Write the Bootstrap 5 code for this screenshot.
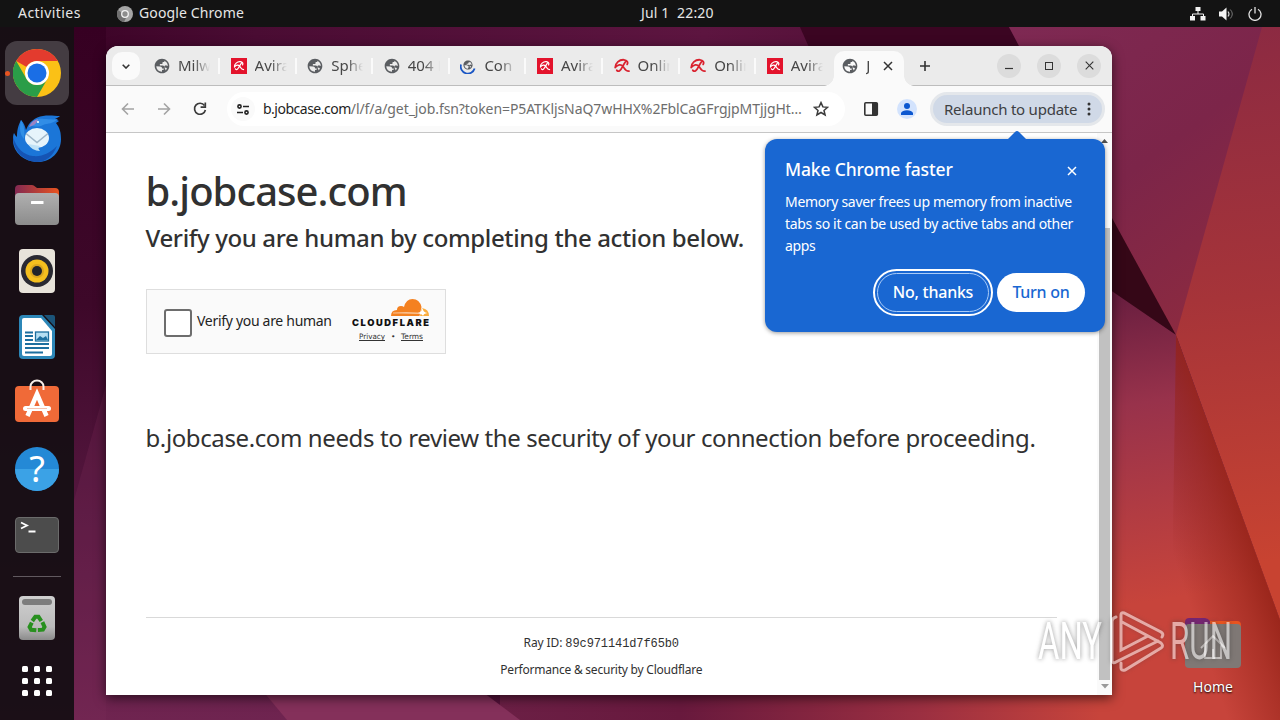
<!DOCTYPE html>
<html lang="en">
<head>
  <meta charset="UTF-8">
  <meta name="viewport" content="width=device-width, initial-scale=1">
  <title>b.jobcase.com</title>
  <link href="https://cdn.jsdelivr.net/npm/bootstrap@5.3.3/dist/css/bootstrap.min.css" rel="stylesheet">
  <style>
    body {
      font-family: "Noto Sans", "Open Sans", sans-serif;
      width: 1280px;
      height: 720px;
      background: #4a0f33;
      line-height: 1.2;
    }
    svg { display: block; flex: none; }
    .wallpaper { z-index: 0; }

    /* top panel */
    .panel {
      height: 27px;
      padding: 0 18px;
      background: #131313;
      color: #e6e6e6;
      font-size: 14px;
      z-index: 2;
    }
    .activities { width: 99px; letter-spacing: .45px; }
    .app-name { width: 502px; letter-spacing: .12px; margin-left: 6px; }
    .clock { letter-spacing: .15px; }
    .panel-icons { gap: 13px; }

    /* dock */
    .desktop { height: 693px; }
    .dock {
      width: 74px;
      padding-top: 14px;
      background: rgba(22, 15, 20, .95);
      gap: 2px;
    }
    .dock-item { width: 64px; height: 64px; border-radius: 12px; }
    .dock-item.running { background: #443c42; }
    .dock-dot { left: 0; top: 30px; width: 5px; height: 5px; background: #e95420; }
    .dock-line { width: 48px; height: 1px; background: #61595f; margin: 7px 0; }
    .dock-apps { height: 58px; }

    /* browser window */
    .window {
      width: 1006px;
      height: 649px;
      margin: 19px 0 0 32px;
      border-radius: 12px 12px 0 0;
      background: #fff;
      box-shadow: 0 3px 12px rgba(0, 0, 0, .6);
    }
    .tabstrip {
      height: 40px;
      padding-left: 6px;
      background: #ebebeb;
      border-bottom: 1px solid #bdbdbd;
      border-radius: 12px 12px 0 0;
      font-size: 15px;
      color: #474747;
    }
    .tab-search { width: 28px; height: 28px; border-radius: 10px; background: #fafafa; margin: 6px 4px 0 0; }
    .tab-item { width: 76.6px; height: 39px; padding-left: 10px; gap: 8px; }
    .tab-label {
      width: 32px;
      line-height: 22px;
      margin-top: -2px;
      -webkit-mask-image: linear-gradient(90deg, #000 50%, transparent);
      mask-image: linear-gradient(90deg, #000 50%, transparent);
    }
    .tab-sep { width: 2px; height: 16px; background: #fafafa; }
    .tab-current {
      width: 70px;
      height: 35px;
      margin: 5px 0 0 1px;
      padding: 0 11px 5px 8px;
      background: #fafafa;
      border-radius: 10px 10px 0 0;
    }
    .tab-current::before, .tab-current::after {
      content: "";
      position: absolute;
      bottom: 0;
      width: 10px;
      height: 10px;
    }
    .tab-current::before { left: -10px; background: radial-gradient(circle at 0 0, transparent 9.5px, #fafafa 10px); }
    .tab-current::after { right: -10px; background: radial-gradient(circle at 100% 0, transparent 9.5px, #fafafa 10px); }
    .tab-current .tab-label { width: 12px; }
    .win-btns { padding-right: 11px; }
    .win-btn { width: 24px; height: 24px; border-radius: 50%; background: #dcdcdc; }

    .toolbar {
      height: 47px;
      background: #fafafa;
      border-bottom: 1px solid #c6c6c6;
      padding: 0 7px 0 12px;
    }
    .tool { width: 20px; height: 20px; margin-right: 16px; }
    .omnibox {
      width: 618px;
      height: 34px;
      margin-left: 1px;
      padding: 0 14px 0 4px;
      border-radius: 17px;
      background: #fff;
      font-size: 14px;
      color: #6d6d6d;
    }
    .site-btn { width: 24px; height: 24px; border-radius: 50%; background: #fafafa; margin-right: 8px; }
    .url { width: 550px; letter-spacing: -.08px; }
    .url b { color: #1f1f1f; font-weight: 400; letter-spacing: -.5px; }
    .profile { width: 20px; height: 20px; border-radius: 50%; background: #d3e3fd; margin-right: 13px; }
    .relaunch {
      width: 175px;
      height: 34px;
      padding: 0 11px;
      border: 3px solid #e4e7eb;
      border-radius: 18px;
      background: #d0d9e7;
      color: #3d4043;
      font-size: 15px;
      letter-spacing: -.23px;
    }

    /* page */
    .page { height: 562px; color: #313131; }
    .page-body { width: 991px; padding: 33px 40px 0 39.5px; }
    .host-title { font-size: 40px; font-weight: 550; line-height: 50px; letter-spacing: -.95px; }
    .verify-title { font-size: 24px; font-weight: 500; line-height: 36px; margin-top: 4px; letter-spacing: -.36px; white-space: nowrap; }
    .challenge {
      width: 300px;
      height: 65px;
      margin: 33px 0 0 .5px;
      padding: 0 15px 0 17px;
      border: 1px solid #dedede;
      background: #fafafa;
      font-size: 14px;
      color: #232323;
    }
    .check { width: 28px; height: 28px; margin: 2px 5px 0 0; border: 2px solid #6d6d6d; border-radius: 3px; background: #fff; }
    .challenge-label { letter-spacing: -.3px; }
    .notice { font-size: 24px; line-height: 36px; margin-top: 66px; white-space: nowrap; letter-spacing: -.39px; }
    .page-foot { border-top: 1px solid #d9d9d9; margin-top: 161px; padding-top: 16px; font-size: 12px; line-height: 18px; }
    .page-foot code { font-family: "Liberation Mono", monospace; font-size: 12px; color: inherit; }
    .foot-id { letter-spacing: -.1px; }
    .foot-label { margin-top: 8px; letter-spacing: -.23px; }

    .scroll-rail { width: 15px; background: #fafafa; padding: 6px 0; }
    .scroll-thumb { width: 11px; height: 452px; background: #c1c1c1; margin-top: 85px; }

    /* promo bubble */
    .bubble {
      left: 659px;
      top: 93px;
      width: 340px;
      height: 193px;
      padding: 18px 20px 20px;
      border-radius: 12px;
      background: #1967d2;
      color: #fff;
      box-shadow: 0 1px 4px rgba(0, 0, 0, .4);
    }
    .bubble-tip { left: 242px; top: -9px; }
    .bubble-title { font-size: 17.5px; font-weight: 550; line-height: 24px; letter-spacing: -.15px; }
    .bubble-text { font-size: 14px; line-height: 22px; margin-top: 10px; letter-spacing: -.32px; }
    .bubble-btn { height: 39px; border-radius: 20px; font-size: 16px; font-weight: 550; letter-spacing: -.25px; }
    .btn-no { width: 112px; border: 1px solid #a9cbf7; outline: 2px solid #fff; outline-offset: 2px; }
    .btn-yes { width: 88px; background: #fff; color: #1967d2; margin-left: 8px; }

    /* desktop items */
    .home-icon { left: 1173px; top: 618px; width: 80px; font-size: 14px; color: #fff; text-shadow: 0 1px 2px #000; }
    .home-label { margin-top: 11px; }
    .watermark { left: 1030px; top: 600px; }
    .watermark g { filter: drop-shadow(0 0 2px rgba(60, 60, 60, .5)); }
  </style>
</head>
<body class="position-relative overflow-hidden m-0">

<!-- shared icons -->
<svg width="0" height="0" class="position-absolute">
  <symbol id="globe" viewBox="0 0 24 24">
    <path fill="#5a5d61" d="M12 1C5.900 1 1 5.900 1 12s4.900 11 11 11 11-4.900 11-11S18.100 1 12 1zM3.500 12.500l5.500 .2c2.500 .2 3.200 1.300 3.200 3.100h2.400v1.700l-2.600 .6v2.600c-4.800 0-8.400-3.600-8.500-8.200zM17.800 18.600l-1.600-2.800c.2-2.400-1-4.200-3.200-4.500H8.800V9h2.500c1 0 1.600-.6 1.600-1.600V6h2.600V4.300c3.200 1.400 5.200 4.300 5.200 7.700l-2.900-1-2.300 1 .8 2.200 3.100.8c-.4 1.400-.9 2.600-1.600 3.600z"/>
  </symbol>
  <symbol id="umbrella" viewBox="0 0 16 16">
    <path fill="none" stroke="currentColor" stroke-width="1.800" stroke-linecap="round" stroke-linejoin="round" d="M1.200 9.500C1.200 5 5.300 1.400 10 1.800c3.200.3 4.300 2.600 3.200 4.600M1.200 9.500C3.800 6.400 7 5.900 9 8.300c1.500 1.800 2 5 6 4.800M11.500 3.800C9 7 8 11 5.600 12.800c-1 .7-2.200.4-2.800-.6"/>
  </symbol>
  <symbol id="avira" viewBox="0 0 16 16">
    <rect width="16" height="16" fill="#e3132c"/>
    <svg x="2.500" y="2.500" width="11" height="11" color="#fff"><use href="#umbrella"/></svg>
  </symbol>
  <symbol id="loading" viewBox="0 0 16 16">
    <svg x="3" y="2" width="10" height="10"><use href="#globe"/></svg>
    <path d="M1 6.500a7 7 0 0 0 13.600 4" fill="none" stroke="#1a56c4" stroke-width="1.800"/>
  </symbol>
  <symbol id="cross" viewBox="0 0 10 10"><path d="M1 1l8 8M9 1L1 9" stroke="currentColor" stroke-width="1.500" fill="none"/></symbol>
</svg>

<!-- wallpaper -->
<svg class="wallpaper position-absolute top-0 start-0" width="1280" height="720" viewBox="0 0 1280 720">
  <defs>
    <linearGradient id="gLeft" x1="0" y1="0" x2="0" y2="1"><stop offset="0" stop-color="#360022"/><stop offset=".4" stop-color="#3d0829"/><stop offset=".7" stop-color="#55173f"/><stop offset="1" stop-color="#6f2450"/></linearGradient>
    <linearGradient id="gTop" x1="0" x2="1"><stop offset="0" stop-color="#360022"/><stop offset=".2" stop-color="#4a0c33"/><stop offset=".55" stop-color="#5d1540"/><stop offset=".8" stop-color="#4d0d32"/><stop offset="1" stop-color="#4d0d32"/></linearGradient>
    <linearGradient id="gRight" gradientUnits="userSpaceOnUse" x1="1010" y1="30" x2="1230" y2="330"><stop offset="0" stop-color="#7e2953"/><stop offset=".5" stop-color="#7c2549"/><stop offset="1" stop-color="#8e2b3f"/></linearGradient>
    <linearGradient id="gEdge" gradientUnits="userSpaceOnUse" x1="1220" y1="30" x2="1280" y2="560"><stop offset="0" stop-color="#8c2a42"/><stop offset=".5" stop-color="#a63439"/><stop offset="1" stop-color="#c84331"/></linearGradient>
    <linearGradient id="gLow" gradientUnits="userSpaceOnUse" x1="1112" y1="300" x2="1160" y2="600"><stop offset="0" stop-color="#6b1f40"/><stop offset=".35" stop-color="#98324b"/><stop offset="1" stop-color="#c7443b"/></linearGradient>
    <linearGradient id="gCorner" gradientUnits="userSpaceOnUse" x1="1188" y1="600" x2="1272" y2="572"><stop offset="0" stop-color="#962318" stop-opacity="0"/><stop offset=".6" stop-color="#962318" stop-opacity=".55"/><stop offset="1" stop-color="#962318"/></linearGradient>
    <linearGradient id="gBottom" x1="0" x2="1"><stop offset="0" stop-color="#6b1f45"/><stop offset=".3" stop-color="#68193d"/><stop offset=".7" stop-color="#9b2f41"/><stop offset="1" stop-color="#c7443b"/></linearGradient>
  </defs>
  <rect width="1280" height="720" fill="url(#gTop)"/>
  <path d="M0 27h106v663h160l24 30H0z" fill="url(#gLeft)"/>
  <path d="M74 500L106 385V720H74z" fill="#7a2a58" opacity=".25"/>
  <path d="M800 27h209l60 113H850z" fill="#3b0522"/>
  <path d="M1009 27h271v310h-104L1090 180z" fill="url(#gRight)"/>
  <path d="M1262 27h18v593L1176 335z" fill="url(#gEdge)"/>
  <path d="M1100 196l76 139-76-50z" fill="#350717"/>
  <path d="M1100 283l76 52 104 285v100h-280V283z" fill="url(#gLow)"/>
  <path d="M1176 335l104 285v100h-110z" fill="url(#gCorner)"/>
  <path d="M500 690h600v30H500z" fill="url(#gBottom)"/>
  <path d="M262 690h218l40 30H287z" fill="#84305a"/>
</svg>

<!-- panel -->
<header class="panel position-relative d-flex align-items-center text-nowrap">
  <span class="activities">Activities</span>
  <svg width="16" height="16" viewBox="0 0 16 16">
    <circle cx="8" cy="8" r="8" fill="#a5a5a5"/><path d="M1 4a8 8 0 0 0 6 12l3-6z" fill="#707070"/><circle cx="8" cy="8" r="3.300" fill="#8d8d8d" stroke="#f3f3f3" stroke-width="1.300"/>
  </svg>
  <span class="app-name">Google Chrome</span>
  <span class="clock">Jul 1&nbsp; 22:20</span>
  <div class="panel-icons d-flex align-items-center ms-auto">
    <svg width="16" height="14" viewBox="0 0 16 14"><path fill="#f2f2f2" d="M5.500 0h5v4h-5zM0 9h5v4.500H0zM10.500 9h5v4.500h-5z"/><path d="M8 4v3M2.500 9.500V7h11v2.500" fill="none" stroke="#f2f2f2"/></svg>
    <svg width="16" height="14" viewBox="0 0 16 14"><path fill="#f2f2f2" d="M0 4.500h3L7.500 .5v13L3 9.500H0z"/><path d="M9 4.500q2 2.500 0 5" fill="none" stroke="#cfcfcf" stroke-width="1.200"/><path d="M11.300 2.500q4 4.500 0 9" fill="none" stroke="#777"/></svg>
    <svg width="14" height="14" viewBox="0 0 14 14"><path d="M4 2.200a6 6 0 1 0 6 0M7 0v6.500" fill="none" stroke="#e2e2e2" stroke-width="1.300"/></svg>
  </div>
</header>

<div class="desktop d-flex position-relative">
  <!-- dock -->
  <nav class="dock d-flex flex-column align-items-center h-100 flex-shrink-0">
    <div class="dock-item running d-flex align-items-center justify-content-center position-relative">
      <span class="dock-dot position-absolute rounded-circle"></span>
      <svg width="48" height="48" viewBox="0 0 48 48">
        <circle cx="24" cy="24" r="24" fill="#fbc116"/>
        <path d="M24 0a24 24 0 0 1 20.800 12H24a12 12 0 0 0-10.400 6L3.200 12A24 24 0 0 1 24 0z" fill="#e33b2e"/>
        <path d="M3.200 12a24 24 0 0 0 20.800 36l10.400-18a12 12 0 0 1-20.800 0z" fill="#2a9d48"/>
        <circle cx="24" cy="24" r="12" fill="#fff"/><circle cx="24" cy="24" r="9.500" fill="#1a6ee6"/>
      </svg>
    </div>
    <div class="dock-item d-flex align-items-center justify-content-center">
      <svg width="48" height="48" viewBox="0 0 48 48">
        <path d="M8 5c3 3 4 6 5 10 3-8 9-13 17-14 6-1 12 0 17 0-1 1-3 2-5 3l4 2-3 2c4 5 5 10 5 16 0 13-10 23-23 23S0 38 0 25c0-3 0-5 1-7 1 2 2 3 3 4 0-7 1-11 4-17z" fill="#1b76d8"/>
        <path d="M0 22c4 12 11 18 20 19 9 1 17-3 24-10-4 10-11 16-20 16S0 39 0 22z" fill="#1554b4"/>
        <path d="M8 5c3 5 4 11 3 19-4-4-5-11-3-19z" fill="#2f8fe6"/>
        <path d="M17 10c3-5 9-7 14-6 5 0 9 1 14 0-5 5-10 4-15 6-4 2-8 2-13 0z" fill="#318de6"/>
        <path d="M16 12c2-5 5-7 9-8-1 4-3 6-9 8z" fill="#9b83c4"/><circle cx="25" cy="7" r="1" fill="#fff"/>
        <ellipse cx="24" cy="23" rx="12" ry="10" fill="#e6f4fb"/><path d="M15 29q4 7 12 7-3-3 0-5z" fill="#bfe2f7"/>
        <path d="M13 18.500l11 9 11-9" stroke="#9fb6c8" stroke-width="1.600" fill="none"/>
      </svg>
    </div>
    <div class="dock-item d-flex align-items-center justify-content-center">
      <svg width="44" height="40" viewBox="0 0 44 40">
        <defs><linearGradient id="fold" x1="0" x2="1"><stop offset="0" stop-color="#822952"/><stop offset="1" stop-color="#e95420"/></linearGradient><linearGradient id="foldF" x1="0" y1="0" x2="0" y2="1"><stop offset="0" stop-color="#b0b0b0"/><stop offset="1" stop-color="#8c8c8c"/></linearGradient></defs>
        <path d="M0 4q0-4 4-4h13q2 0 3 1.500l2 1.500h18q4 0 4 4v10H0z" fill="url(#fold)"/>
        <rect y="8" width="44" height="32" rx="4" fill="url(#foldF)"/><rect x="16" y="16" width="12.500" height="3" rx=".5" fill="#fff"/>
      </svg>
    </div>
    <div class="dock-item d-flex align-items-center justify-content-center">
      <svg width="36" height="44" viewBox="0 0 36 44">
        <rect width="36" height="44" rx="4" fill="#e8e3da"/><circle cx="18" cy="22" r="16" fill="#2a2932"/><circle cx="18" cy="22" r="11.500" fill="#f5bf1e"/><circle cx="18" cy="22" r="7" fill="#d9a520"/><circle cx="18" cy="22" r="5" fill="#20232b"/>
      </svg>
    </div>
    <div class="dock-item d-flex align-items-center justify-content-center">
      <svg width="36" height="44" viewBox="0 0 36 44">
        <path d="M4 0h19l13 14v26q0 4-4 4H4q-4 0-4-4V4q0-4 4-4z" fill="#2c87b8"/><path d="M25 0h9q2 0 2 2v10z" fill="#1b5479"/>
        <path d="M5 3h17l11 13v23q0 2-2 2H5q-2 0-2-2V5q0-2 2-2z" fill="#fff"/>
        <path d="M6 17.500h8M6 21h8M6 25h8M6 29h24M6 33h24M6 37.500h18" stroke="#1d6f9f" stroke-width="2"/>
        <rect x="16.500" y="17" width="13" height="9" fill="#b5def2" stroke="#1d6f9f" stroke-width="1.300"/><path d="M17 25l4-4 3 2 3-2 2 4z" fill="#1d6f9f"/>
      </svg>
    </div>
    <div class="dock-item d-flex align-items-center justify-content-center pb-1">
      <svg width="44" height="44" viewBox="0 0 44 44">
        <rect y="7" width="44" height="36" rx="4" fill="#f06a38"/><path d="M15.500 11V7.500a6.500 6 0 0 1 13 0V11" fill="none" stroke="#f8efe9" stroke-width="2"/>
        <path d="M12.500 37L22 15l9.500 22" fill="none" stroke="#fff" stroke-width="4.500"/><rect x="8" y="27" width="28" height="5" rx="2.500" fill="#fff"/><path d="M12 29.500h20" stroke="#f3b59d" stroke-width=".8"/>
      </svg>
    </div>
    <div class="dock-item d-flex align-items-center justify-content-center">
      <svg width="44" height="44" viewBox="0 0 44 44">
        <circle cx="22" cy="22" r="22" fill="#2489d6"/><path d="M0 22a22 22 0 0 0 44 0z" fill="#3ba2e6"/>
        <text x="22" y="35" text-anchor="middle" font-size="36" fill="#fff">?</text>
      </svg>
    </div>
    <div class="dock-item d-flex align-items-center justify-content-center">
      <svg width="44" height="36" viewBox="0 0 44 36">
        <rect x=".5" y=".5" width="43" height="35" rx="3.500" fill="#4c4c4c" stroke="#6b6b6b"/>
        <path d="M6 5.500l6 3-6 3M13.500 14.500h7" fill="none" stroke="#fff" stroke-width="1.800"/>
      </svg>
    </div>
    <div class="dock-line"></div>
    <div class="dock-item d-flex align-items-center justify-content-center">
      <svg width="36" height="44" viewBox="0 0 36 44">
        <defs><linearGradient id="bin" x1="0" y1="0" x2="0" y2="1"><stop offset="0" stop-color="#cfcfcf"/><stop offset=".7" stop-color="#bbb"/><stop offset="1" stop-color="#8b8b8b"/></linearGradient></defs>
        <rect width="36" height="44" rx="4" fill="url(#bin)"/><rect x="3" y="3" width="30" height="6" rx="3" fill="#7d7d7d"/>
        <g fill="none" stroke="#28901f" stroke-width="4">
          <path d="M13.300 25l3-4.200h3.200l2.800 4.200"/>
          <path d="M13.300 25l3-4.200h3.200l2.800 4.200" transform="rotate(120 18 28.500)"/>
          <path d="M13.300 25l3-4.200h3.200l2.800 4.200" transform="rotate(240 18 28.500)"/>
        </g>
      </svg>
    </div>
    <div class="dock-item dock-apps d-flex align-items-center justify-content-center">
      <svg width="30" height="30" viewBox="0 0 30 30" fill="#fff">
        <rect width="6" height="6" rx="1.500"/><rect x="12" width="6" height="6" rx="1.500"/><rect x="24" width="6" height="6" rx="1.500"/>
        <rect y="12" width="6" height="6" rx="1.500"/><rect x="12" y="12" width="6" height="6" rx="1.500"/><rect x="24" y="12" width="6" height="6" rx="1.500"/>
        <rect y="24" width="6" height="6" rx="1.500"/><rect x="12" y="24" width="6" height="6" rx="1.500"/><rect x="24" y="24" width="6" height="6" rx="1.500"/>
      </svg>
    </div>
  </nav>

  <!-- browser -->
  <main class="window position-relative flex-shrink-0">
    <div class="tabstrip d-flex">
      <div class="tab-search d-flex align-items-center justify-content-center">
        <svg width="8" height="5" viewBox="0 0 8 5"><path d="M.7 .7L4 4 7.300 .7" fill="none" stroke="#333" stroke-width="1.600"/></svg>
      </div>
      <div class="d-flex" id="tabs"></div>
      <div class="tab-current position-relative d-flex align-items-center">
        <svg width="16" height="16"><use href="#globe"/></svg>
        <span class="tab-label overflow-hidden ms-2">J</span>
        <svg class="ms-auto" width="10" height="10" color="#333"><use href="#cross"/></svg>
      </div>
      <div class="d-flex align-items-center flex-grow-1 ps-3">
        <svg width="10" height="10" viewBox="0 0 10 10"><path d="M5 0v10M0 5h10" stroke="#333" stroke-width="1.600"/></svg>
        <div class="win-btns d-flex gap-3 ms-auto">
          <span class="win-btn d-flex align-items-center justify-content-center"><svg width="8" height="8"><path d="M0 6.500h8" stroke="#333" stroke-width="1.200"/></svg></span>
          <span class="win-btn d-flex align-items-center justify-content-center"><svg width="8" height="8"><rect x=".5" y=".5" width="7" height="7" fill="none" stroke="#333"/></svg></span>
          <span class="win-btn d-flex align-items-center justify-content-center"><svg width="9" height="9" viewBox="0 0 9 9"><path d="M.7 .7l7.600 7.600M8.300 .7L.7 8.300" stroke="#333" stroke-width="1.100"/></svg></span>
        </div>
      </div>
    </div>

    <div class="toolbar d-flex align-items-center">
      <svg class="tool" viewBox="0 0 20 20"><path d="M16 10H5M10 4.500L4.500 10l5.500 5.500" fill="none" stroke="#a3a3a3" stroke-width="1.600"/></svg>
      <svg class="tool" viewBox="0 0 20 20"><path d="M4 10h11M10 4.500l5.500 5.500-5.500 5.500" fill="none" stroke="#a3a3a3" stroke-width="1.600"/></svg>
      <svg class="tool" viewBox="0 0 20 20"><path d="M14.500 6.500A5.500 5.500 0 1 0 15.400 11" fill="none" stroke="#3b3b3b" stroke-width="1.700"/><path d="M15.300 3.500V8.200h-4.700" fill="none" stroke="#3b3b3b" stroke-width="1.700"/></svg>
      <div class="omnibox d-flex align-items-center">
        <span class="site-btn d-flex align-items-center justify-content-center">
          <svg width="12" height="11" viewBox="0 0 12 11" fill="none" stroke="#222" stroke-width="1.600"><circle cx="2.500" cy="2.500" r="1.600"/><path d="M6 2.500h6M0 8.500h6"/><circle cx="9.500" cy="8.500" r="1.600"/></svg>
        </span>
        <span class="url text-nowrap"><b>b.jobcase.com</b>/l/f/a/get_job.fsn?token=P5ATKljsNaQ7wHHX%2FblCaGFrgjpMTjjgHt…</span>
        <svg width="16" height="16" viewBox="0 0 16 16"><path d="M8 1.600l1.900 4.300 4.700.4-3.600 3.100 1.100 4.600L8 11.500 3.900 14 5 9.400 1.400 6.300l4.700-.4z" fill="none" stroke="#3b3b3b" stroke-width="1.500"/></svg>
      </div>
      <svg class="ms-3" width="18" height="16" viewBox="-3 0 18 16"><rect x=".8" y="1.800" width="12.500" height="12.500" rx="1" fill="none" stroke="#333" stroke-width="1.600"/><path d="M8 2h5v12H8z" fill="#333"/></svg>
      <span class="profile d-flex align-items-center justify-content-center ms-auto"><svg width="12" height="12" viewBox="0 0 12 12" fill="#0b57d0"><circle cx="6" cy="3" r="3"/><path d="M0 12V9.800Q1.500 7.300 6 7.300t6 2.500V12z"/></svg></span>
      <div class="relaunch d-flex align-items-center justify-content-between">
        <span class="text-nowrap">Relaunch to update</span>
        <svg width="4" height="14" viewBox="0 0 4 14" fill="#333"><circle cx="2" cy="2" r="1.500"/><circle cx="2" cy="7" r="1.500"/><circle cx="2" cy="12" r="1.500"/></svg>
      </div>
    </div>

    <div class="page d-flex">
      <div class="page-body">
        <h1 class="host-title m-0">b.jobcase.com</h1>
        <h2 class="verify-title mb-0">Verify you are human by completing the action below.</h2>
        <div class="challenge d-flex align-items-center">
          <span class="check"></span>
          <span class="challenge-label text-nowrap">Verify you are human</span>
          <svg class="ms-auto mb-1" width="78" height="46" viewBox="0 0 78 46">
            <path d="M39 19q0-6 6-6 0-4 4-4 2 0 3 1 2-8 8.500-8 7 0 9 8l-2 9z" fill="#f48120"/>
            <path d="M68 19l2-8q7 1 7 8z" fill="#faad3f"/>
            <path d="M41 15.700q14-.4 25 0 4-.5 4.500-5 .5 5 5 5.300-4 .5-4.500 3-1-2.500-5-2.500-12-.4-25-.2z" fill="#fff"/>
            <text x="0" y="29" textLength="77" lengthAdjust="spacing" font-family="Inter" font-weight="900" font-size="9.300" fill="#111">CLOUDFLARE</text>
            <g font-family="DejaVu Sans" font-size="7.500" fill="#333"><text x="7" y="42" textLength="26" lengthAdjust="spacingAndGlyphs">Privacy</text><text x="39" y="42">•</text><text x="49" y="42" textLength="22" lengthAdjust="spacingAndGlyphs">Terms</text></g>
            <path d="M7 43.500h26M49 43.500h22" stroke="#333"/>
          </svg>
        </div>
        <p class="notice mb-0">b.jobcase.com needs to review the security of your connection before proceeding.</p>
        <div class="page-foot text-center">
          <div class="foot-id">Ray ID: <code>89c971141d7f65b0</code></div>
          <div class="foot-label">Performance &amp; security by Cloudflare</div>
        </div>
      </div>
      <div class="scroll-rail d-flex flex-column align-items-center">
        <svg width="7" height="4"><path d="M0 4l3.500-4L7 4z" fill="#505050"/></svg>
        <div class="scroll-thumb"></div>
        <svg class="mt-1" width="8" height="5"><path d="M0 0h8L4 4.500z" fill="#9a9a9a"/></svg>
      </div>
    </div>

    <div class="bubble position-absolute d-flex flex-column">
      <svg class="bubble-tip position-absolute" width="20" height="10"><path d="M0 10l8-8q2-2 4 0l8 8z" fill="#1967d2"/></svg>
      <div class="d-flex align-items-center justify-content-between">
        <span class="bubble-title">Make Chrome faster</span>
        <svg class="me-2 mt-1" width="10" height="10" color="#fff"><use href="#cross"/></svg>
      </div>
      <div class="bubble-text text-nowrap">Memory saver frees up memory from inactive<br>tabs so it can be used by active tabs and other<br>apps</div>
      <div class="d-flex justify-content-end mt-auto">
        <div class="bubble-btn btn-no d-flex align-items-center justify-content-center">No, thanks</div>
        <div class="bubble-btn btn-yes d-flex align-items-center justify-content-center">Turn on</div>
      </div>
    </div>
  </main>
</div>

<!-- desktop icon -->
<div class="home-icon position-absolute d-flex flex-column align-items-center">
  <svg width="56" height="50" viewBox="0 0 56 50">
    <path d="M0 4q0-4 4-4h16q3 0 5 3h27q4 0 4 4v8H0z" fill="#e95420"/><path d="M0 4q0-4 4-4h16q3 0 5 3v8H0z" fill="#762572"/>
    <rect y="6" width="56" height="44" rx="4" fill="#7f7875"/>
    <path d="M16 30l12-12 12 12M20 27v13h16V27M28 40v-9" fill="none" stroke="#c9c4c2" stroke-width="1.800"/>
  </svg>
  <span class="home-label">Home</span>
</div>

<svg class="watermark position-absolute" width="210" height="80" viewBox="0 0 210 80">
  <g opacity=".55">
    <g font-family="Roboto" font-size="52" font-weight="400" fill="#fff">
      <text x="8" y="59" textLength="64" lengthAdjust="spacingAndGlyphs">ANY</text>
      <text x="140" y="59" textLength="62" lengthAdjust="spacingAndGlyphs">RUN</text>
    </g>
    <path d="M132 37q2-3-1-5L94 13q-3-1-3 2v35l27-14M86 17q-4 1-4 5v39q1 3 4 1l42-21M92 22l39 21q3 3 0 5L95 70q-4 1-4-2v-5" fill="none" stroke="#fff" stroke-width="3" stroke-linecap="round"/>
  </g>
</svg>

<script>
  const tabs = [
    ['globe', 'Milw'], ['avira', 'Avira'], ['globe', 'Sphe'], ['globe', '404 N'], ['loading', 'Con'],
    ['avira', 'Avira'], ['umbrella', 'Onlin'], ['umbrella', 'Onlin'], ['avira', 'Avira']
  ];
  document.getElementById('tabs').innerHTML = tabs.map(([icon, label], i) =>
    `<div class="tab-item d-flex align-items-center">
      <svg width="16" height="16" color="#d9222f"><use href="#${icon}"/></svg>
      <span class="tab-label overflow-hidden text-nowrap">${label}</span>
      ${i < 8 ? '<span class="tab-sep"></span>' : ''}
    </div>`).join('');
</script>
<script src="https://cdn.jsdelivr.net/npm/bootstrap@5.3.3/dist/js/bootstrap.bundle.min.js"></script>
</body>
</html>
